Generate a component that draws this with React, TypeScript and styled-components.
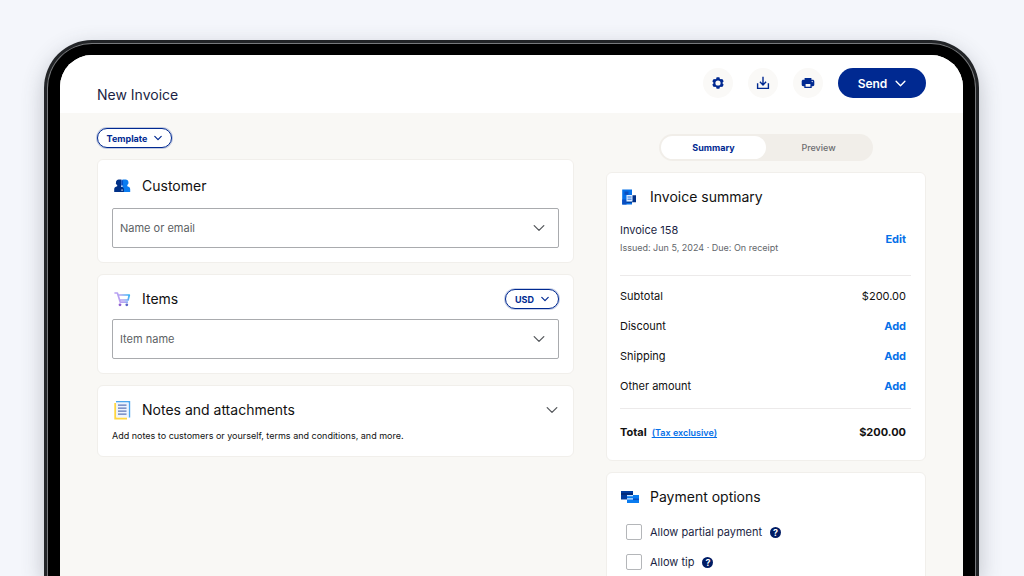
import React, { useState } from "react";
import styled, { createGlobalStyle } from "styled-components";

const navy = "#002991";
const blue = "#0570e8";

const Global = createGlobalStyle`
  * { box-sizing: border-box; }
  body { margin: 0; background: #f4f6fb; }
  body, button, input { font-family: Inter, "Liberation Sans", sans-serif; }
  h1, h2, h3, p { margin: 0; font-weight: 400; }
  button { margin: 0; padding: 0; border: 0; background: none; cursor: pointer; }
`;

const Stage = styled.div`
  height: 100vh;
  overflow: hidden;
  padding: 40px 45px 0 44px;
  display: flex;
  background: #f4f6fb;
`;

const Device = styled.div`
  flex: 1;
  display: flex;
  border: 3px solid #222427;
  border-bottom: 0;
  border-radius: 48px 48px 0 0;
  background: #000;
  box-shadow: 0 8px 22px rgba(60, 66, 80, 0.3);
`;

const Bezel = styled.div`
  flex: 1;
  display: flex;
  border: 1px solid #77797c;
  border-bottom: 0;
  border-radius: 45px 45px 0 0;
  padding: 11px 12px 0;
`;

const Screen = styled.main`
  flex: 1;
  display: flex;
  flex-direction: column;
  overflow: hidden;
  border-radius: 32px 32px 0 0;
  background: #f9f8f5;
`;

const Header = styled.header`
  flex: none;
  display: flex;
  align-items: flex-start;
  justify-content: space-between;
  height: 58px;
  padding: 13px 37px 0;
  background: #fff;
`;

const Title = styled.h1`
  padding-top: 17px;
  font-size: 14px;
  line-height: 20px;
  color: #1b1f44;
`;

const Actions = styled.div`
  display: flex;
  align-items: center;
  gap: 15px;
`;

const IconButton = styled.button`
  display: grid;
  place-items: center;
  width: 30px;
  height: 30px;
  border-radius: 50%;
  background: #faf9f7;
  color: ${navy};
`;

const SendButton = styled.button`
  display: flex;
  align-items: center;
  justify-content: center;
  gap: 8px;
  width: 88px;
  height: 30px;
  border-radius: 15px;
  background: ${navy};
  color: #fff;
  font-size: 12px;
  font-weight: 600;
`;

const Columns = styled.div`
  display: grid;
  grid-template-columns: 1fr 320px;
  gap: 32px;
  align-items: start;
  padding: 15px 37px 0;
`;

const Column = styled.div<{ $top?: number }>`
  display: flex;
  flex-direction: column;
  gap: 11px;
  padding-top: ${(p) => p.$top ?? 0}px;
`;

const Pill = styled.button<{ $width: number }>`
  display: flex;
  align-items: center;
  justify-content: center;
  gap: 7px;
  width: ${(p) => p.$width}px;
  height: 20px;
  border: 1px solid ${navy};
  border-radius: 10px;
  box-shadow: 0 0 0 1px rgba(0, 41, 145, 0.22);
  background: #fff;
  color: ${navy};
  font-size: 9px;
  font-weight: 700;
`;

const Card = styled.section`
  display: flex;
  flex-direction: column;
  padding: 12px 14px 14px;
  border: 1px solid #f1efeb;
  border-radius: 6px;
  background: #fff;
`;

const RoomyCard = styled(Card)`
  padding-top: 14px;
`;

const SideCard = styled(Card)`
  padding: 12px 14px 5px 13px;
`;

const CardHead = styled.div`
  display: flex;
  align-items: center;
  gap: 10px;
  height: 24px;
`;

const CardTitle = styled.h2`
  flex: 1;
  font-size: 14px;
  line-height: 24px;
  color: #111;
`;

const Field = styled.div<{ $gap: number }>`
  display: flex;
  align-items: center;
  height: 40px;
  margin-top: ${(p) => p.$gap}px;
  padding: 0 12px 0 7px;
  border: 1px solid #a9abae;
  border-radius: 2px;
`;

const FieldInput = styled.input`
  flex: 1;
  min-width: 0;
  padding: 0;
  border: 0;
  outline: 0;
  background: none;
  font-size: 11px;
  color: #111;
  &::placeholder { color: #5c5f64; opacity: 1; }
`;

const ChevronButton = styled.button`
  display: grid;
  place-items: center;
  width: 14px;
  height: 20px;
  color: #55585c;
`;

const Note = styled.p`
  margin-top: 8px;
  font-size: 9px;
  line-height: 12px;
  color: #111;
`;

const Tabs = styled.div`
  display: grid;
  grid-template-columns: 1fr 1fr;
  align-self: center;
  width: 214px;
  height: 27px;
  padding: 2px;
  border-radius: 14px;
  background: #f1eee9;
`;

const Tab = styled.button`
  border-radius: 12px;
  font-size: 9px;
  font-weight: 500;
  color: #6c6d70;
  &[aria-selected="true"] { background: #fff; color: ${navy}; font-weight: 700; }
`;

const Row = styled.div`
  display: flex;
  align-items: center;
  justify-content: space-between;
  height: 30px;
  padding-right: 5px;
  font-size: 11px;
  color: #111;
`;

const Meta = styled(Row)`
  height: 60px;
  margin-bottom: 6px;
`;

const InvoiceNumber = styled.h3`
  font-size: 11px;
  line-height: 18px;
  color: #1b1f44;
`;

const Dates = styled.p`
  font-size: 9px;
  line-height: 18px;
  color: #63666b;
`;

const Group = styled.div`
  padding: 5px 0 7px;
  border-top: 1px solid #eceaea;
  border-bottom: 1px solid #eceaea;
`;

const TotalRow = styled(Row)`
  height: 46px;
  font-weight: 700;
`;

const TextButton = styled.button`
  color: ${blue};
  font-size: 11px;
  font-weight: 700;
`;

const TaxLink = styled.a`
  margin-left: 5px;
  color: ${blue};
  font-size: 9px;
  font-weight: 600;
`;

const Options = styled.div`
  margin-top: 8px;
`;

const Option = styled.div`
  display: flex;
  align-items: center;
  gap: 8px;
  height: 30px;
  padding-left: 6px;
`;

const OptionLabel = styled.label`
  display: flex;
  align-items: center;
  gap: 8px;
  font-size: 11px;
  color: #1b1f44;
`;

const Check = styled.input`
  appearance: none;
  width: 16px;
  height: 16px;
  margin: 0;
  border: 1px solid #b4b6b9;
  border-radius: 2px;
  background: #fff;
  &:checked { background: ${navy}; }
`;

const Help = styled.button`
  display: grid;
  place-items: center;
  width: 11px;
  height: 11px;
  border-radius: 50%;
  background: #001c64;
  color: #fff;
  font-size: 9px;
  line-height: 11px;
  font-weight: 700;
`;

const Chevron = ({ w = 11, stroke = 1.3 }: { w?: number; stroke?: number }) => (
  <svg width={w} height={w} viewBox="0 0 12 12" fill="none" stroke="currentColor" strokeWidth={stroke} strokeLinecap="round" strokeLinejoin="round" aria-hidden>
    <path d="M1.2 3.6 6 8.4l4.8-4.8" />
  </svg>
);

const GearIcon = () => (
  <svg width="12" height="12" viewBox="0 0 12 12" aria-hidden>
    <path fill="currentColor" fillRule="evenodd" d="M4.6.3h2.8l.4 1.400 1 .6 1.500-.4 1.400 2.400-1.100 1.100v1.200l1.100 1.100-1.400 2.400-1.500-.4-1 .6-.4 1.400H4.600l-.4-1.400-1-.6-1.500.4L.3 7.700l1.100-1.100V5.400L.3 4.300l1.400-2.400 1.500.4 1-.6zM6 3.400a2.600 2.600 0 1 0 0 5.200 2.600 2.600 0 0 0 0-5.200z" />
  </svg>
);

const DownloadIcon = () => (
  <svg width="14" height="14" viewBox="0 0 14 14" fill="none" stroke="currentColor" strokeWidth="1.4" aria-hidden>
    <path d="M7 .8v8M3.9 5.8 7 8.900l3.100-3.100M1.600 7.200v5.200h10.800V7.200" />
  </svg>
);

const PrinterIcon = () => (
  <svg width="14" height="12" viewBox="0 0 14 12" aria-hidden>
    <path fill="currentColor" fillRule="evenodd" d="M3.6 1h6.800v1.800h1.300c1 0 1.600.7 1.600 1.600v3.400c0 .8-.6 1.400-1.400 1.400h-1.200v1.900H3.300V9.200H2.100C1.300 9.200.7 8.600.7 7.800V4.400c0-.9.7-1.600 1.600-1.600h1.300zM4.600 6.900v2.900h4.800V6.900z" />
    <circle cx="11.2" cy="4.6" r=".7" fill="#fff" />
  </svg>
);

const PeopleIcon = () => (
  <svg width="20" height="18" viewBox="0 0 20 18" aria-hidden>
    <path fill="#0a7cf0" d="M10.500 2.600h3.200a2.900 2.900 0 0 1 1.600 5.300v1.400c1.800.4 2.900 1.300 2.900 3V15H10V4z" />
    <path fill="#003087" d="M7.300 2.600h2.200v5.800l-.4.400v.7c1.700.4 2.800 1.300 2.800 2.900V15H2.200v-2.700c0-1.700 1.200-2.600 3-3V7.900a2.900 2.900 0 0 1 2.100-5.300z" />
    <path fill="#0550c8" d="M9.300 3.200h1.800v5.600H9.300z" />
    <path fill="#dceaff" d="M9.400 8.600h1.300v1.200H9.400zM9.400 12.600h1.300v1.200H9.400z" />
  </svg>
);

const CartIcon = () => (
  <svg width="20" height="18" viewBox="0 0 20 18" fill="none" aria-hidden>
    <defs>
      <linearGradient id="cart" x1="3" y1="12" x2="17" y2="4" gradientUnits="userSpaceOnUse">
        <stop offset="0" stopColor="#c79af0" />
        <stop offset="0.5" stopColor="#b0a4f2" />
        <stop offset="1" stopColor="#2fb4f5" />
      </linearGradient>
    </defs>
    <path stroke="url(#cart)" strokeWidth="1.7" strokeLinejoin="round" d="M2.400 3h3l2.900 9.200h7.600M5.900 5h11.400l-1.200 5H7.400" />
    <circle cx="8" cy="14.800" r="1.400" fill="#8f5fd0" />
    <circle cx="14.800" cy="14.800" r="1.400" fill="#5a62c8" />
  </svg>
);

const NotesIcon = () => (
  <svg width="20" height="20" viewBox="0 0 20 20" fill="none" aria-hidden>
    <path d="M3.300 3v15.400H15" stroke="#ffd640" strokeWidth="2" />
    <path d="M4 1.800h13.400v15.800" stroke="#4ba6ee" strokeWidth="1.600" />
    <path d="M4.200 2.600h12.400v14.800H4.200z" fill="#edf4ff" />
    <path d="M6 5.200h8.500M6 8.200h8.500M6 11.200h8.500M6 14.200h8.500" stroke="#5d76b8" strokeWidth="1.200" />
  </svg>
);

const InvoiceIcon = () => (
  <svg width="20" height="18" viewBox="0 0 20 18" aria-hidden>
    <path fill="#0570e8" d="M2.200 1.500H12v15H2.200z" />
    <path fill="#0a4ec0" d="M2.200 11.500h4.300v5H2.200zM4.500 3.500h4v3.300h-4z" />
    <path fill="#003087" d="M12 7.200h4v7h-4z" />
    <path fill="#003087" d="M6.500 13.500H12v1.200H6.500z" />
    <path fill="#e2eeff" d="M6.500 7h6v6.500h-6z" />
    <path stroke="#0a60d8" strokeWidth=".9" d="M7.500 9h4M7.500 11.200h4" />
  </svg>
);

const CardsIcon = () => (
  <svg width="20" height="18" viewBox="0 0 20 18" aria-hidden>
    <path fill="#003a9e" d="M1 3h12v8.500H1z" />
    <path fill="#0a7cf0" d="M7 7h12v8H7z" />
    <path fill="#00297a" d="M1 5h12v2H1z" />
    <path fill="#cfe4ff" d="M7 7h6v1.200H7zM7 10.200h6v1.200H7z" />
    <path fill="#0550c8" d="M13 10.500h6v1.600h-6z" />
  </svg>
);

export default function App() {
  const [tab, setTab] = useState("Summary");
  return (
    <>
      <Global />
      <Stage>
        <Device>
          <Bezel>
            <Screen>
              <Header>
                <Title>New Invoice</Title>
                <Actions>
                  <IconButton aria-label="Settings"><GearIcon /></IconButton>
                  <IconButton aria-label="Download"><DownloadIcon /></IconButton>
                  <IconButton aria-label="Print"><PrinterIcon /></IconButton>
                  <SendButton>Send <Chevron stroke={1.5} /></SendButton>
                </Actions>
              </Header>
              <Columns>
                <Column>
                  <Pill $width={75}>Template <Chevron w={8} stroke={1.8} /></Pill>
                  <RoomyCard>
                    <CardHead>
                      <PeopleIcon />
                      <CardTitle>Customer</CardTitle>
                    </CardHead>
                    <Field $gap={10}>
                      <FieldInput aria-label="Customer name or email" placeholder="Name or email" />
                      <ChevronButton aria-label="Show customers"><Chevron w={12} /></ChevronButton>
                    </Field>
                  </RoomyCard>
                  <Card>
                    <CardHead>
                      <CartIcon />
                      <CardTitle>Items</CardTitle>
                      <Pill $width={54}>USD <Chevron w={8} stroke={1.8} /></Pill>
                    </CardHead>
                    <Field $gap={8}>
                      <FieldInput aria-label="Item name" placeholder="Item name" />
                      <ChevronButton aria-label="Show items"><Chevron w={12} /></ChevronButton>
                    </Field>
                  </Card>
                  <Card>
                    <CardHead>
                      <NotesIcon />
                      <CardTitle>Notes and attachments</CardTitle>
                      <ChevronButton aria-label="Expand notes"><Chevron w={12} /></ChevronButton>
                    </CardHead>
                    <Note>Add notes to customers or yourself, terms and conditions, and more.</Note>
                  </Card>
                </Column>
                <Column $top={6}>
                  <Tabs role="tablist">
                    {["Summary", "Preview"].map((name) => (
                      <Tab key={name} role="tab" aria-selected={tab === name} onClick={() => setTab(name)}>{name}</Tab>
                    ))}
                  </Tabs>
                  <SideCard>
                    <CardHead>
                      <InvoiceIcon />
                      <CardTitle>Invoice summary</CardTitle>
                    </CardHead>
                    <Meta>
                      <div>
                        <InvoiceNumber>Invoice 158</InvoiceNumber>
                        <Dates>Issued: Jun 5, 2024 · Due: On receipt</Dates>
                      </div>
                      <TextButton>Edit</TextButton>
                    </Meta>
                    <Group>
                      <Row><span>Subtotal</span><span>$200.00</span></Row>
                      {["Discount", "Shipping", "Other amount"].map((name) => (
                        <Row key={name}><span>{name}</span><TextButton>Add</TextButton></Row>
                      ))}
                    </Group>
                    <TotalRow>
                      <span>Total<TaxLink href="#tax">(Tax exclusive)</TaxLink></span>
                      <span>$200.00</span>
                    </TotalRow>
                  </SideCard>
                  <SideCard>
                    <CardHead>
                      <CardsIcon />
                      <CardTitle>Payment options</CardTitle>
                    </CardHead>
                    <Options>
                      {["Allow partial payment", "Allow tip"].map((name) => (
                        <Option key={name}>
                          <OptionLabel><Check type="checkbox" />{name}</OptionLabel>
                          <Help aria-label={`About: ${name}`}>?</Help>
                        </Option>
                      ))}
                    </Options>
                  </SideCard>
                </Column>
              </Columns>
            </Screen>
          </Bezel>
        </Device>
      </Stage>
    </>
  );
}
